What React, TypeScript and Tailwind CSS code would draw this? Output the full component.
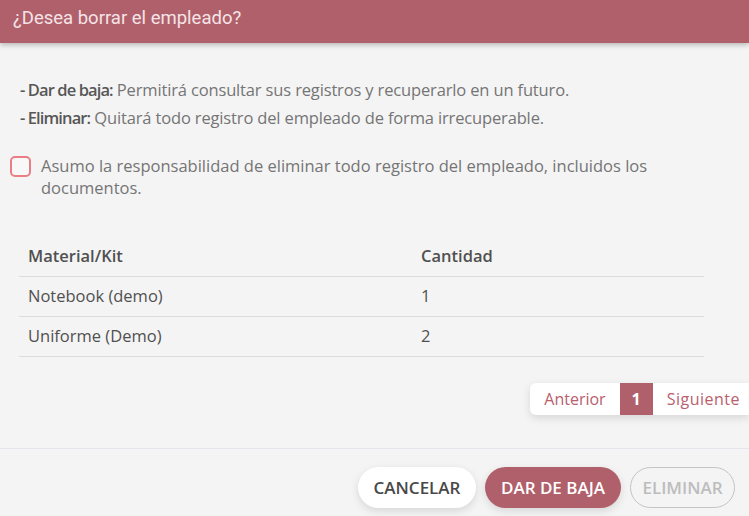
const rows = [
  { item: "Notebook (demo)", qty: 1 },
  { item: "Uniforme (Demo)", qty: 2 },
];

export default function App() {
  return (
    <div className="w-[749px] h-[516px] overflow-hidden bg-[#f4f4f4] flex flex-col font-['Open_Sans',sans-serif]">
      {/* Header */}
      <div className="h-[43px] shrink-0 bg-[#b0606b] flex items-center px-[13px] shadow-[0_2px_5px_rgba(0,0,0,0.25)] relative z-10">
        <h2 className="text-[18.5px] text-[#f5e4e7] font-['Roboto',sans-serif] pb-[5px]">¿Desea borrar el empleado?</h2>
      </div>

      {/* Body */}
      <div className="flex-1 flex flex-col pt-[33px] px-[20px] text-[16.5px] text-[#757575]">
        <p className="leading-[28px] tracking-[-0.15px]">
          <span className="font-semibold text-[#575757] tracking-[-0.9px]">- Dar de baja:</span> Permitirá consultar sus registros y recuperarlo en un futuro.
        </p>
        <p className="leading-[28px] tracking-[-0.15px]">
          <span className="font-semibold text-[#575757] tracking-[-0.9px]">- Eliminar:</span> Quitará todo registro del empleado de forma irrecuperable.
        </p>

        <label className="flex items-start gap-[10px] mt-[23px] -ml-[10px] pr-[80px]">
          <span className="mt-[1px] w-[21px] h-[21px] shrink-0 rounded-[5px] border-2 border-[#e97f85] bg-[#f8f8f8]" />
          <span className="leading-[22px]">
            Asumo la responsabilidad de eliminar todo registro del empleado, incluidos los documentos.
          </span>
        </label>

        <table className="mt-[39px] w-[685px] -ml-[1px] text-[#505050] border-collapse">
          <thead>
            <tr className="border-b border-[#dcdcdc]">
              <th className="text-left font-semibold h-[38px] pl-[9px] w-[402px]">Material/Kit</th>
              <th className="text-left font-semibold">Cantidad</th>
            </tr>
          </thead>
          <tbody>
            {rows.map((r) => (
              <tr key={r.item} className="border-b border-[#dcdcdc]">
                <td className="h-[40px] pl-[9px]">{r.item}</td>
                <td>{r.qty}</td>
              </tr>
            ))}
          </tbody>
        </table>

        {/* Pagination */}
        <div className="flex justify-end mt-[26px] -mr-[20px]">
          <div className="flex items-center h-[32px] bg-white rounded-l-[6px] shadow-[0_3px_8px_rgba(0,0,0,0.12)] text-[#b8606d] text-[16px] pr-[9px]">
            <span className="px-[14px]">Anterior</span>
            <span className="w-[33px] h-[32px] bg-[#b0606b] text-white font-bold flex items-center justify-center">1</span>
            <span className="pl-[14px] tracking-[0.5px]">Siguiente</span>
          </div>
        </div>
      </div>

      {/* Footer */}
      <div className="h-[68px] shrink-0 border-t border-[#e2e6ea] flex items-start justify-end gap-[9px] pt-[18px] pr-[14px]">
        <button className="h-[41px] w-[118px] rounded-full bg-white text-[#484848] text-[17px] font-semibold shadow-[0_3px_8px_rgba(0,0,0,0.12)]">
          CANCELAR
        </button>
        <button className="h-[41px] w-[136px] rounded-full bg-[#b0606b] text-white text-[17px] font-semibold shadow-[0_3px_8px_rgba(0,0,0,0.12)]">
          DAR DE BAJA
        </button>
        <button className="h-[41px] w-[105px] rounded-full border border-[#c4c4c4] text-[#bdbdbd] text-[17px] font-semibold">
          ELIMINAR
        </button>
      </div>
    </div>
  );
}
